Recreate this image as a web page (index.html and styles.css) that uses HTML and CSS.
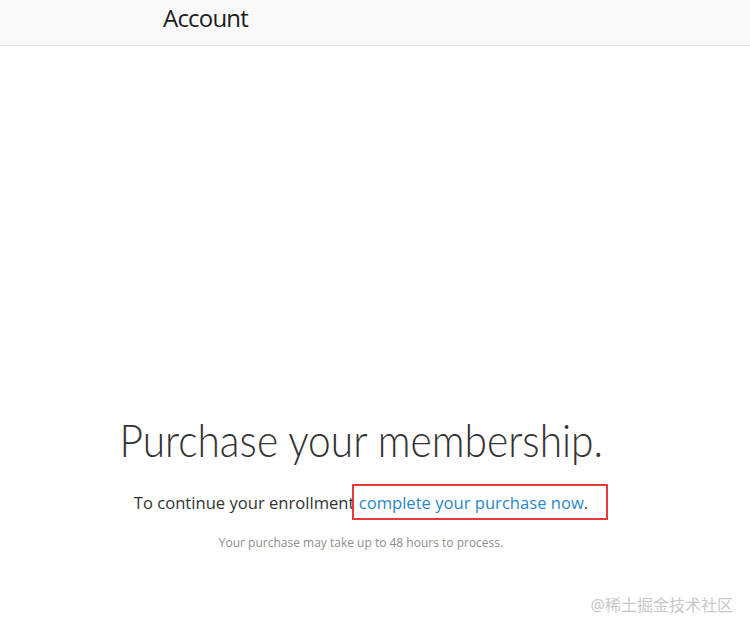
FILE: index.html
```html
<!DOCTYPE html>
<html>
<head>
<meta charset="utf-8">
<link rel="stylesheet" href="styles.css">
</head>
<body>
<header class="topbar">
  <div class="topbar-title">Account</div>
</header>
<main class="content">
  <h1 class="title">Purchase your membership.</h1>
  <p class="lead">To continue your enrollment <span class="mark"><a class="link" href="#">complete your purchase now</a>.</span></p>
  <p class="note">Your purchase may take up to 48 hours to process.</p>
</main>
<div class="watermark">@稀土掘金技术社区</div>
</body>
</html>
```
FILE: styles.css
```css
html, body {
  margin: 0;
  padding: 0;
  background: #ffffff;
  height: 100%;
  overflow: hidden;
}
body {
  font-family: "Open Sans", "Noto Sans", sans-serif;
  color: #333;
  position: relative;
}
.topbar {
  height: 46px;
  background: #f9f9f9;
  border-bottom: 1px solid #e6e6e6;
  box-sizing: border-box;
  display: flex;
  align-items: flex-start;
  padding-left: 163px;
  padding-top: 6px;
}
.topbar-title {
  font-size: 24px;
  line-height: 24px;
  color: #1d1d1d;
  letter-spacing: -0.8px;
}
.content {
  display: flex;
  flex-direction: column;
  align-items: center;
  padding-top: 366px;
  padding-right: 28px;
}
.title {
  margin: 0;
  font-family: "Lato", "Open Sans", sans-serif;
  font-weight: 300;
  font-size: 46px;
  line-height: 56px;
  color: #333;
  transform: scaleX(0.885);
}
.lead {
  margin: 23px 0 0;
  font-size: 16.6px;
  line-height: 24px;
  color: #333;
}
.mark {
  position: relative;
}
.mark::after {
  content: "";
  position: absolute;
  left: -7px;
  right: -20px;
  top: -7px;
  bottom: -6px;
  border: 2px solid #e53a3a;
}
.link {
  color: #2a88c9;
  text-decoration: none;
}
.note {
  margin: 19px 0 0;
  font-size: 12px;
  color: #8e8e8e;
}
.watermark {
  position: absolute;
  right: 17px;
  top: 592px;
  font-family: "Noto Sans", "Noto Sans CJK SC", sans-serif;
  font-size: 16px;
  color: #c8c8c8;
}
```
